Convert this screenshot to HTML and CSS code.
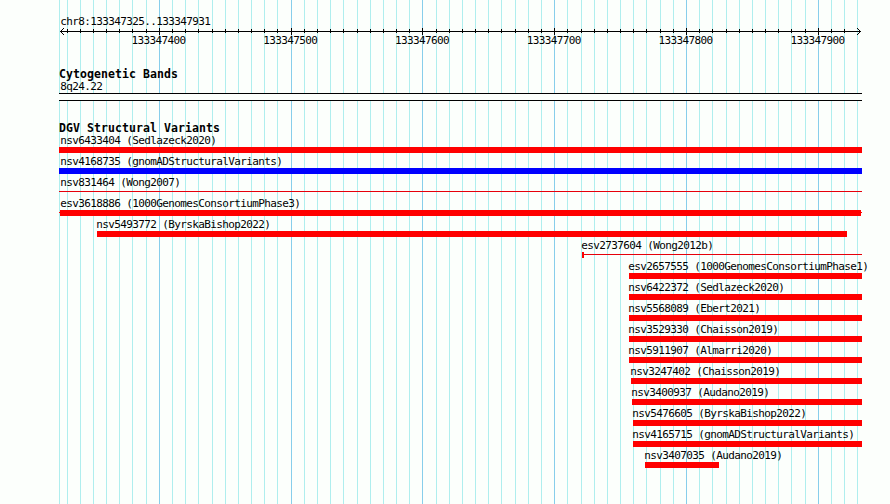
FILE: index.html
```html
<!DOCTYPE html>
<html lang="en">
<head>
<meta charset="utf-8">
<title>chr8:133347325..133347931</title>
<link rel="stylesheet" href="styles.css">
</head>
<body>
<main class="browser">
<svg class="grid" width="890" height="504" shape-rendering="crispEdges" aria-hidden="true"><path id="minor"/><path id="major"/></svg>
<header class="ruler">
<div class="region">chr8:133347325..133347931</div>
<svg class="scale" width="804" height="8" shape-rendering="crispEdges" aria-hidden="true"><path id="ticks"/><path d="M1 3h801v1H1zM2 2h1v3H2zM3 1h1v1H3zM3 5h1v1H3zM4 0h1v1H4zM4 6h1v1H4zM800 2h1v3h-1zM799 1h1v1h-1zM799 5h1v1h-1zM798 0h1v1h-1zM798 6h1v1h-1z"/></svg>
<div class="numbers"><span>133347400</span><span>133347500</span><span>133347600</span><span>133347700</span><span>133347800</span><span>133347900</span></div>
</header>
<section class="cyto">
<h2>Cytogenetic Bands</h2>
<div class="band-name">8q24.22</div>
<div class="band"></div>
</section>
<section class="variants">
<h2>DGV Structural Variants</h2>
<div class="row"><span>nsv6433404 (Sedlazeck2020)</span><i class="bar"></i></div>
<div class="row"><span>nsv4168735 (gnomADStructuralVariants)</span><i class="bar blue"></i></div>
<div class="row"><span>nsv831464 (Wong2007)</span><i class="bar thin"></i></div>
<div class="row"><span>esv3618886 (1000GenomesConsortiumPhase3)</span><i class="bar inset"></i></div>
<div class="row s97 e847"><span>nsv5493772 (ByrskaBishop2022)</span><i class="bar"></i></div>
<div class="row s582"><span>esv2737604 (Wong2012b)</span><i class="bar thin capped"></i></div>
<div class="row s629"><span>esv2657555 (1000GenomesConsortiumPhase1)</span><i class="bar"></i></div>
<div class="row s629"><span>nsv6422372 (Sedlazeck2020)</span><i class="bar"></i></div>
<div class="row s629"><span>nsv5568089 (Ebert2021)</span><i class="bar"></i></div>
<div class="row s629"><span>nsv3529330 (Chaisson2019)</span><i class="bar"></i></div>
<div class="row s629"><span>nsv5911907 (Almarri2020)</span><i class="bar"></i></div>
<div class="row s631"><span>nsv3247402 (Chaisson2019)</span><i class="bar"></i></div>
<div class="row s632"><span>nsv3400937 (Audano2019)</span><i class="bar"></i></div>
<div class="row s633"><span>nsv5476605 (ByrskaBishop2022)</span><i class="bar"></i></div>
<div class="row s633"><span>nsv4165715 (gnomADStructuralVariants)</span><i class="bar"></i></div>
<div class="row s645 e719"><span>nsv3407035 (Audano2019)</span><i class="bar"></i></div>
</section>
</main>
<script src="grid.js"></script>
</body>
</html>
```
FILE: grid.js
```js
// One grid line every 10 bases, a major one every 100.
let minor = 'M59 0h1v504h-1z';
let major = '';
let ticks = '';
for (let k = -7; k <= 53; k++) {
  const x = Math.floor(159.3 + 13.18 * k);
  const isMajor = k % 10 === 0;
  const line = `M${x} 0h1v504h-1z`;
  if (isMajor) major += line; else minor += line;
  if (k < 53) ticks += isMajor ? `M${x - 59} 0h1v7h-1z` : `M${x - 59} 1h1v4h-1z`;
}
document.getElementById('minor').setAttribute('d', minor);
document.getElementById('major').setAttribute('d', major);
document.getElementById('ticks').setAttribute('d', ticks);
```
FILE: styles.css
```css
body { margin: 0; background: #fcfffc; color: #000; }
.browser {
  position: relative;
  box-sizing: border-box;
  width: 890px;
  height: 504px;
  padding: 16px 28px 0 59px;
  overflow: hidden;
  font: 11px/12px "DejaVu Sans Mono", "Liberation Mono", monospace;
  letter-spacing: -0.622px;
  white-space: nowrap;
}
.grid { position: absolute; left: 0; top: 0; z-index: -1; }
#minor { fill: #afeeee; }
#major { fill: #87ceeb; }
.region { height: 12px; padding-left: 1.2px; }
.scale { display: block; }
.numbers { display: flex; height: 12px; margin-top: -1px; padding-left: 72.4px; }
.numbers span { flex: 0 0 131.8px; }
h2 {
  margin: 0;
  height: 12px;
  font: bold 11.5px/10px "DejaVu Sans Mono", "Liberation Mono", monospace;
  letter-spacing: 0.076px;
}
.cyto { margin-top: 22px; }
.band-name { height: 12px; padding-left: 1.2px; }
.band {
  box-sizing: border-box;
  height: 8px;
  border: solid #000;
  border-width: 1px 0;
  background: #fcfffc;
}
.variants { margin-top: 22px; }
.row { height: 21px; }
.row span { display: block; height: 12px; padding-left: 1.2px; }
.bar { display: block; height: 6px; background: #f00; }
.blue { background: #00f; }
.thin { background: linear-gradient(#e6000a, #e6000a) 0 2px / 100% 1px no-repeat; }
.capped { border-left: 2px solid #f00; }
.inset { background: linear-gradient(#f00, #f00) 1px 0 / 801px 6px no-repeat, linear-gradient(#f00, #f00) 0 2px / 100% 1px no-repeat; }
.s97 { margin-left: 38px; }
.s582 { margin-left: 523px; }
.s629 { margin-left: 570px; }
.s631 { margin-left: 572px; }
.s632 { margin-left: 573px; }
.s633 { margin-left: 574px; }
.s645 { margin-left: 586px; }
.s97 span, .s582 span, .s629 span, .s631 span, .s632 span, .s633 span, .s645 span { padding-left: 0; margin-left: -0.8px; }
.e847 { margin-right: 15px; }
.e719 { margin-right: 143px; }
```
